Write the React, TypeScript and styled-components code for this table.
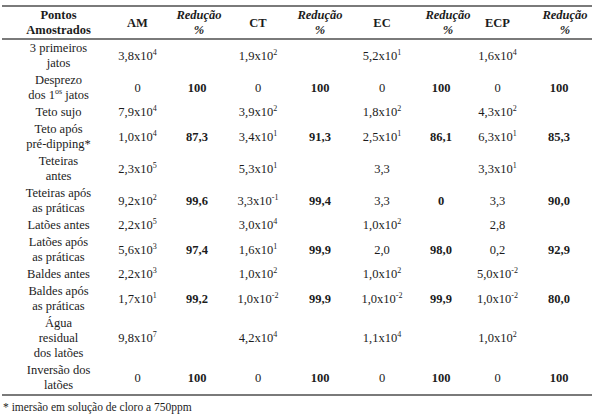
import React from "react";
import styled, { createGlobalStyle } from "styled-components";

const Global = createGlobalStyle`
  html, body { margin: 0; padding: 0; background: #ffffff; }
  body { font-family: "Liberation Serif", "Times New Roman", serif; color: #1c1c1c; }
`;

const COLS = "96px 69px 60px 62px 62px 62px 56px 57px 66px";

const Page = styled.div`
  padding: 5px 0 0 2px;
  width: 590px;
`;

const Table = styled.div`
  width: 590px;
  border-top: 2px solid #7a7a7a;
  border-bottom: 2px solid #7a7a7a;
`;

const HeaderRow = styled.div`
  display: grid;
  grid-template-columns: ${COLS};
  border-bottom: 2px solid #7a7a7a;
  padding-top: 1px;
`;

const Row = styled.div`
  display: grid;
  grid-template-columns: ${COLS};
  padding: 1px 0;
`;

const Cell = styled.div<{ $shift?: number; $bold?: boolean; $italic?: boolean }>`
  display: flex;
  align-items: center;
  justify-content: center;
  text-align: center;
  font-size: 12.5px;
  line-height: 15px;
  padding-left: ${(p) => p.$shift ?? 0}px;
  font-weight: ${(p) => (p.$bold ? 700 : 400)};
  font-style: ${(p) => (p.$italic ? "italic" : "normal")};
  white-space: nowrap;
  min-width: 0;
`;

const Sup = styled.sup`
  font-size: 8px;
  line-height: 0;
  vertical-align: 5px;
`;

const Footnote = styled.div`
  margin-top: 4px;
  font-size: 11.5px;
  line-height: 14px;
  padding-left: 1px;
`;

const shifts = [17, 10, 0, 0, 0, 0, 0, 0, 0];
const headShifts = [17, 10, 4, 0, 0, 0, 14, 0, 12];

const Num: React.FC<{ v: string }> = ({ v }) => {
  const i = v.indexOf("^");
  if (i < 0) return <>{v}</>;
  return (
    <>
      {v.slice(0, i)}
      <Sup>{v.slice(i + 1)}</Sup>
    </>
  );
};

type RowData = { label: React.ReactNode; vals: string[] };

const rows: RowData[] = [
  { label: <>3 primeiros<br />jatos</>, vals: ["3,8x10^4", "", "1,9x10^2", "", "5,2x10^1", "", "1,6x10^4", ""] },
  { label: <>Desprezo<br />dos 1<Sup>os</Sup> jatos</>, vals: ["0", "100", "0", "100", "0", "100", "0", "100"] },
  { label: <>Teto sujo</>, vals: ["7,9x10^4", "", "3,9x10^2", "", "1,8x10^2", "", "4,3x10^2", ""] },
  { label: <>Teto após<br />pré-dipping*</>, vals: ["1,0x10^4", "87,3", "3,4x10^1", "91,3", "2,5x10^1", "86,1", "6,3x10^1", "85,3"] },
  { label: <>Teteiras<br />antes</>, vals: ["2,3x10^5", "", "5,3x10^1", "", "3,3", "", "3,3x10^1", ""] },
  { label: <>Teteiras após<br />as práticas</>, vals: ["9,2x10^2", "99,6", "3,3x10^-1", "99,4", "3,3", "0", "3,3", "90,0"] },
  { label: <>Latões antes</>, vals: ["2,2x10^5", "", "3,0x10^4", "", "1,0x10^2", "", "2,8", ""] },
  { label: <>Latões após<br />as práticas</>, vals: ["5,6x10^3", "97,4", "1,6x10^1", "99,9", "2,0", "98,0", "0,2", "92,9"] },
  { label: <>Baldes antes</>, vals: ["2,2x10^3", "", "1,0x10^2", "", "1,0x10^2", "", "5,0x10^-2", ""] },
  { label: <>Baldes após<br />as práticas</>, vals: ["1,7x10^1", "99,2", "1,0x10^-2", "99,9", "1,0x10^-2", "99,9", "1,0x10^-2", "80,0"] },
  { label: <>Água<br />residual<br />dos latões</>, vals: ["9,8x10^7", "", "4,2x10^4", "", "1,1x10^4", "", "1,0x10^2", ""] },
  { label: <>Inversão dos<br />latões</>, vals: ["0", "100", "0", "100", "0", "100", "0", "100"] },
];

const headers = ["AM", "CT", "EC", "ECP"];

export default function App() {
  return (
    <>
      <Global />
      <Page>
        <Table>
          <HeaderRow>
            <Cell $bold $shift={headShifts[0]}>
              Pontos<br />Amostrados
            </Cell>
            {headers.map((h, i) => (
              <React.Fragment key={h}>
                <Cell $bold $shift={headShifts[1 + i * 2]}>{h}</Cell>
                <Cell $bold $italic $shift={headShifts[2 + i * 2]}>
                  Redução<br />%
                </Cell>
              </React.Fragment>
            ))}
          </HeaderRow>
          {rows.map((r, ri) => (
            <Row key={ri}>
              <Cell $shift={shifts[0]}>
                <span>{r.label}</span>
              </Cell>
              {r.vals.map((v, ci) => (
                <Cell key={ci} $bold={ci % 2 === 1} $shift={shifts[ci + 1]}>
                  <span>
                    <Num v={v} />
                  </span>
                </Cell>
              ))}
            </Row>
          ))}
        </Table>
        <Footnote>* imersão em solução de cloro a 750ppm</Footnote>
      </Page>
    </>
  );
}
